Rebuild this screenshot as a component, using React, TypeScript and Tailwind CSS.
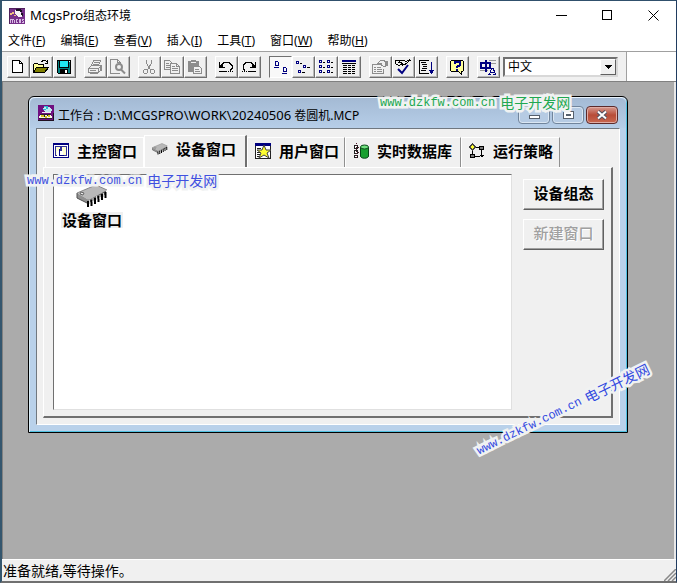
import { useState } from "react";
import type { ReactNode } from "react";
import clsx from "clsx";

const MENUS = [
  { label: "文件", hotkey: "F" },
  { label: "编辑", hotkey: "E" },
  { label: "查看", hotkey: "V" },
  { label: "插入", hotkey: "I" },
  { label: "工具", hotkey: "T" },
  { label: "窗口", hotkey: "W" },
  { label: "帮助", hotkey: "H" },
];

function Icon({ children, className = "w-4 h-4" }: { children: ReactNode; className?: string }) {
  return (
    <svg className={clsx("block shrink-0", className)} viewBox="0 0 16 16" fill="none" shapeRendering="crispEdges" aria-hidden="true">
      {children}
    </svg>
  );
}

/* ---------- Toolbar icons ---------- */

const NewIcon = () => (
  <Icon>
    <path d="M2.5 1.5h7l3 3v9h-10z" fill="#fff" stroke="#000" />
    <path d="M9.5 1.5v3h3" stroke="#000" />
  </Icon>
);

const OpenIcon = () => (
  <Icon>
    <path d="M.5 13.5v-8l1-1h3l1 1h5v3" fill="#ffff99" stroke="#000" />
    <path d="M.5 13.5l3-5h12l-4 5z" fill="#808000" stroke="#000" />
    <path d="M8.5 3.5l1-2h3l2 2M14.5 1v3M12 4.5h3" stroke="#000" />
  </Icon>
);

const SaveIcon = () => (
  <Icon>
    <path d="M1.5 1.5h13v13h-12l-1-1z" fill="#008080" stroke="#000" />
    <path d="M4 2h8v6H4z" fill="#20e8f0" />
    <path d="M4 10h8v4H4z" fill="#000" />
    <path d="M9 11h2v3H9zM13 2h1v1h-1z" fill="#fff" />
    <path d="M3.5 2v6M12.5 2v6M3 8.5h10" stroke="#000" />
  </Icon>
);

const PrintIcon = () => (
  <Icon className="w-4 h-4 text-[#8c8c8c]">
    <path d="M4.5 6.5l2-5h7l-2 5M7 3.5h5M6 5.500h5" stroke="currentColor" />
    <path d="M1.5 9.5l3-3h10v4l-3 3h-10zM1.5 9.5h10l3-3M11.5 9.5v4M3 11.5h6" stroke="currentColor" />
    <path d="M3 13h8v2H3zM13 8h2v4h-2z" fill="currentColor" />
  </Icon>
);

const PreviewIcon = () => (
  <Icon className="w-4 h-4 text-[#8c8c8c]">
    <path d="M9.5 14.5h-9v-14h7l3 3v2M7.5 .5v3h3" stroke="currentColor" />
    <circle cx="9" cy="8" r="3" stroke="currentColor" strokeWidth="2" shapeRendering="auto" />
    <path d="M11 10.5l4 4" stroke="currentColor" strokeWidth="2" shapeRendering="auto" />
  </Icon>
);

const CutIcon = () => (
  <Icon className="w-4 h-4 text-[#8c8c8c]">
    <path d="M5.5 1v3l4 7M10.5 1v3l-4 7" stroke="currentColor" />
    <path d="M3.5 10.5h2l1 1v2l-1 1h-2l-1-1v-2zM10.5 10.5h2l1 1v2l-1 1h-2l-1-1v-2z" stroke="currentColor" />
  </Icon>
);

const CopyIcon = () => (
  <Icon className="w-4 h-4 text-[#8c8c8c]">
    <path d="M.5 1.5h5l2 2v7h-7zM2 4.5h3M2 6.5h4M2 8.5h4" stroke="currentColor" />
    <path d="M6.5 4.5h6l3 3v7h-9z" fill="#f0f0f0" stroke="currentColor" />
    <path d="M12.5 4.5v3h3M8 7.5h3M8 9.5h6M8 11.5h6" stroke="currentColor" />
  </Icon>
);

const PasteIcon = () => (
  <Icon className="w-4 h-4 text-[#8c8c8c]">
    <path d="M1 2h3V1h5v1h3v11H1z" fill="currentColor" />
    <path d="M4 3h5v1H4z" fill="#f0f0f0" />
    <path d="M6.5 7.5h6l2 2v5h-8z" fill="#f0f0f0" stroke="currentColor" />
    <path d="M8 10.5h4M8 12.5h5" stroke="currentColor" />
  </Icon>
);

const UndoIcon = () => (
  <Icon>
    <path d="M3 6.5l3-3h5l3 3v3l-2 2" stroke="#000" />
    <path d="M1 3h1v5h5v1H1zM2 6h3v2H2z" fill="#000" />
    <path d="M1 12.5h8" stroke="#000" />
    <path d="M10 12.5h5" stroke="#000" strokeDasharray="1 1" />
  </Icon>
);

const RedoIcon = () => (
  <Icon>
    <path d="M13 6.5l-3-3H5l-3 3v3l2 2" stroke="#000" />
    <path d="M14 3h1v6H9V8h5zM11 6h3v2h-3z" fill="#000" />
    <path d="M7 12.5h8" stroke="#000" />
    <path d="M1 12.5h5" stroke="#000" strokeDasharray="1 1" />
  </Icon>
);

const LargeIconsIcon = () => (
  <Icon className="w-4 h-4 text-[#000080]">
    <path d="M3.5 2.5h2l1 1v3h-3zM2 8.5h5M11.5 8.5h2l1 1v3h-3zM10 14.5h5" stroke="currentColor" />
  </Icon>
);

const SmallIconsIcon = () => (
  <Icon className="w-4 h-4 text-[#000080]">
    <path d="M1 2h3v3H1zM8 6h3v3H8zM3 11h3v3H3z" fill="currentColor" />
    <path d="M2 3h1v1H2zM9 7h1v1H9zM4 12h1v1H4z" fill="#fff" />
    <path d="M5 4.5h2M12 8.5h3M7 13.5h3" stroke="#000" />
  </Icon>
);

const ListIcon = () => (
  <Icon className="w-4 h-4 text-[#000080]">
    {[1, 6, 11].map((y) => (
      <g key={y}>
        <path d={`M1 ${y}h3v3h-3zM9 ${y}h3v3h-3z`} fill="currentColor" />
        <path d={`M2 ${y + 1}h1v1h-1zM10 ${y + 1}h1v1h-1z`} fill="#fff" />
        <path d={`M5 ${y + 2}h2v1h-2zM13 ${y + 2}h2v1h-2z`} fill="#000" />
      </g>
    ))}
  </Icon>
);

const DetailIcon = () => (
  <Icon>
    <path d="M1 1h14v2H1z" fill="#000080" />
    <path d="M1 4.5h14" stroke="#000" />
    <path d="M2 6.5h12M2 8.5h12M2 10.5h12M2 12.5h12M2 14.5h12" stroke="#000" strokeDasharray="4 1 3 1 3 1" />
  </Icon>
);

const PropertiesIcon = () => (
  <Icon className="w-4 h-4 text-[#8c8c8c]">
    <path d="M9.5 5.5h-9v9h11v-5M2 8.5h2M2 10.5h2M2 12.5h2M5 8.5h4M5 10.5h5M5 12.5h5" stroke="currentColor" />
    <path d="M5.5 4.5l3-3h3l4 2v3l-3 1-3-1v-2z" fill="#f0f0f0" stroke="currentColor" />
    <path d="M13 2h3v5h-3z" fill="currentColor" />
  </Icon>
);

const CheckIcon = () => (
  <Icon>
    <path d="M.5 1.5h5l-2 2h3v2l-3 1-3-2zM6 1.5h3l2 1 4-2M7.5 4v2l3-1 5-4" stroke="#000" />
    <path d="M3 10l4 4 6-8" stroke="#000080" strokeWidth="2" shapeRendering="auto" />
  </Icon>
);

const SortIcon = () => (
  <Icon>
    <path d="M10.5 14.5h-9v-13h9M3 3.5h5M4 5.5h5M5 7.5h4M4 9.5h5M3 11.5h5" stroke="#000" />
    <path d="M13 3h1v12h-1zM11 11h5v1h-5zM12 12h3v2h-3z" fill="#000080" />
  </Icon>
);

const HelpIcon = () => (
  <Icon>
    <path d="M2.5 1.5h11l1 1v9l-1 1h-1v3l-3-3h-7l-1-1v-9z" fill="#ffff99" stroke="#000" />
    <path d="M6 5V3h5v3L8 8v1" stroke="#000080" strokeWidth="2" />
    <path d="M7 10h2v2H7z" fill="#000080" />
  </Icon>
);

const LanguageIcon = () => (
  <Icon>
    <path d="M0 4.5h16M0 11.5h8M9 1.5h7" stroke="#999" />
    <path d="M1 4h9v5H1zM5.5 1v12" stroke="#000080" strokeWidth="2" />
    <path d="M9.5 15l2.500-6h1l2.500 6M10 13h5M8 15.5h3M13 15.5h3" stroke="#000080" />
  </Icon>
);

/* ---------- Application icons ---------- */

function AppIcon() {
  return (
    <Icon>
      <path d="M0 0h16v16H0z" fill="#76308a" />
      <path d="M0 0h16v1H0zM0 0h1v16H0z" fill="#50205c" />
      <path d="M6 2h4l2 2 2 3-2 2H9L6 6z" fill="#f8f4f8" />
      <path d="M7 1h5v1h1v2h-2V3H7zM12 5h2v3h-1V7h-1z" fill="#181020" />
      <path d="M1 5h2V4h2v2H3v1H1zM5 7h2v1H5z" fill="#f0c080" />
      <path d="M1 11h4v1H1zM1 12h1v3H1zM3 12h1v3H3zM5 12h1v3H5zM7 11h2v1H8v2h1v1H7zM10 11h2v4h-2zM13 11h2v1h-1v1h1v2h-2v-1h1v-1h-1z" fill="#d8b8e4" />
    </Icon>
  );
}

function WorkbenchIcon() {
  return (
    <Icon>
      <path d="M0 0h16v16H0z" fill="#701080" />
      <path d="M4 4l3-2h4l4 3-3 2H7z" fill="#c0e8f0" />
      <path d="M6 1h4v1H6zM5 4h3v1H5zM8 2h2v2H8z" fill="#28b8d0" />
      <path d="M4 7h9v1H4z" fill="#f0e8f4" />
      <path d="M2 9h11l1 4H1z" fill="#f8f8e8" />
      <path d="M3 10h3v2H3zM7 11h2v2H7zM10 10h2v2h-2z" fill="#d8c820" />
      <path d="M2 9h11v1H2zM6 10h1v2H6zM9 10h1v1H9zM1 13h13v1H1z" fill="#302030" />
      <path d="M0 15h16v1H0zM15 8h1v8h-1z" fill="#201020" />
    </Icon>
  );
}

function ChipIcon({ className }: { className: string }) {
  return (
    <svg className={clsx("block shrink-0", className)} viewBox="0 0 32 24" fill="none" aria-hidden="true">
      <path d="M12 15L30 6v4L13 19z" fill="#606060" />
      <path d="M1 9L20 1l11 5-18 10z" fill="#b8b8b8" />
      <path d="M1 9L20 1l11 5" stroke="#888" />
      <path d="M1 9l12 7v4L1 14z" fill="#909090" />
      <path d="M1 9v5l12 6" stroke="#505050" />
      <path d="M5 8l3 1-1 2-3-1z" fill="#e8e8e8" stroke="#666" />
      <path d="M12 17v6M15.500 16v6M19 14v6M22.500 12v6M26 10v6M29.500 8v6" stroke="#000" strokeWidth="2" />
      <path d="M13.500 16v4M17 14v4M20.500 12v4M24 11v4M27.500 9v4" stroke="#d8d8d8" />
    </svg>
  );
}

const MainWindowIcon = () => (
  <Icon>
    <path d="M.5 .5h15v14H.5z" fill="#fff" stroke="#000080" />
    <path d="M0 0h16v2H0z" fill="#000080" />
    <path d="M2.5 3.500h5v9h-5z" fill="#ffffd0" stroke="#303098" />
    <path d="M8.5 3.500h5v9h-5z" fill="#ffffd0" stroke="#303098" />
    <path d="M4 8h6v4H7v1H4z" fill="#fff" />
    <path d="M6.5 6v6h4" stroke="#000080" />
  </Icon>
);

const UserWindowIcon = () => (
  <Icon>
    <path d="M.5 .5h15v15H.5z" fill="#fff" stroke="#222" />
    <path d="M0 0h16v3H0z" fill="#000080" />
    <path d="M2 5.5h4M2 7.5h3M2 9.5h3M2 11.5h3M2 13.5h4" stroke="#222" />
    <path d="M9 2l2 5h5l-4 3 2 5-5-3-5 3 2-5-4-3h5z" fill="#ffff30" stroke="#444" shapeRendering="auto" />
  </Icon>
);

const DatabaseIcon = () => (
  <Icon>
    <path d="M1.5 2.5h3v3h-3zM1.5 7.5h3v3h-3zM1.5 12.5h3v2h-3z" fill="#fff" stroke="#222" />
    <path d="M3.5 0v16M5 4.5h3M5 9.5h3" stroke="#501828" strokeDasharray="1 1" />
    <path d="M7.5 4v9c0 3 8 3 8 0V4" fill="#18a030" stroke="#084818" shapeRendering="auto" />
    <ellipse cx="11.5" cy="4" rx="4" ry="2" fill="#70e080" stroke="#084818" shapeRendering="auto" />
  </Icon>
);

const StrategyIcon = () => (
  <Icon>
    <path d="M5 4.5h8M12.5 5v8M10.500 13.500H6M3.5 5v7" stroke="#000" />
    <path d="M3.5 1l3 3-3 3-3-3z" fill="#ffff30" stroke="#444" />
    <path d="M1.5 11.5h4v3h-4zM10.5 3.5h4v3h-4z" fill="#777" stroke="#000" />
    <path d="M11 12h4l-2 3z" fill="#000" />
  </Icon>
);

const TOOL_GROUPS = [
  [
    { label: "新建", icon: <NewIcon /> },
    { label: "打开", icon: <OpenIcon /> },
    { label: "保存", icon: <SaveIcon /> },
  ],
  [
    { label: "打印", icon: <PrintIcon />, disabled: true },
    { label: "打印预览", icon: <PreviewIcon />, disabled: true },
  ],
  [
    { label: "剪切", icon: <CutIcon />, disabled: true },
    { label: "复制", icon: <CopyIcon />, disabled: true },
    { label: "粘贴", icon: <PasteIcon />, disabled: true },
  ],
  [
    { label: "撤消", icon: <UndoIcon /> },
    { label: "重做", icon: <RedoIcon /> },
  ],
  [
    { label: "大图标", icon: <LargeIconsIcon />, pressed: true },
    { label: "小图标", icon: <SmallIconsIcon /> },
    { label: "列表", icon: <ListIcon /> },
    { label: "详细资料", icon: <DetailIcon /> },
  ],
  [
    { label: "属性", icon: <PropertiesIcon />, disabled: true },
    { label: "组态检查", icon: <CheckIcon /> },
    { label: "排序", icon: <SortIcon /> },
  ],
  [{ label: "帮助", icon: <HelpIcon /> }],
  [{ label: "语言", icon: <LanguageIcon /> }],
];

const TABS = [
  { label: "主控窗口", icon: <MainWindowIcon />, width: "w-[99px]" },
  { label: "设备窗口", icon: <ChipIcon className="w-4 h-3" />, width: "w-[103px]" },
  { label: "用户窗口", icon: <UserWindowIcon />, width: "w-[98px]" },
  { label: "实时数据库", icon: <DatabaseIcon />, width: "w-[116px]" },
  { label: "运行策略", icon: <StrategyIcon />, width: "w-[99px]" },
];

function ToolButton({ label, icon, pressed, disabled }: { label: string; icon: ReactNode; pressed?: boolean; disabled?: boolean }) {
  return (
    <button
      type="button"
      aria-label={label}
      aria-pressed={pressed}
      disabled={disabled}
      className={clsx(
        "flex h-[22px] w-[23px] items-center justify-center border pr-px",
        pressed
          ? "border-t-[#707070] border-l-[#707070] border-r-white border-b-white bg-[#f8f8f8]"
          : "border-t-white border-l-white border-r-[#707070] border-b-[#707070] bg-[#f0f0f0] shadow-[inset_-1px_-1px_0_#b8b8b8]"
      )}
    >
      {icon}
    </button>
  );
}

function SideButton({ children, disabled }: { children: ReactNode; disabled?: boolean }) {
  return (
    <button
      type="button"
      disabled={disabled}
      className="h-[31px] w-full border border-t-white border-l-white border-r-[#606060] border-b-[#606060] bg-[#f0f0f0] pb-1 text-[15px] leading-5 font-bold shadow-[inset_-1px_-1px_0_#a0a0a0] disabled:font-medium disabled:text-[#a0a0a0] disabled:[text-shadow:1px_1px_0_#fff]"
    >
      {children}
    </button>
  );
}

function Watermark({ className }: { className: string }) {
  return (
    <div
      className={clsx(
        "pointer-events-none absolute z-10 flex items-center gap-[5px] leading-5 whitespace-nowrap [paint-order:stroke_fill] [-webkit-text-stroke:5px_#f0f2f2]",
        className
      )}
    >
      <span className="font-['Liberation_Mono',monospace] text-[12px]">www.dzkfw.com.cn</span>
      <span className="text-[14px]">电子开发网</span>
    </div>
  );
}

export default function App() {
  const [activeTab, setActiveTab] = useState("设备窗口");
  const [language, setLanguage] = useState("中文");

  return (
    <div className="relative flex min-h-screen flex-col overflow-hidden border-t border-r border-b-2 border-l-2 border-t-[#30506c] border-r-[#203c60] border-b-[#707070] border-l-[#34566e] bg-white font-['Noto_Sans','Noto_Sans_CJK_SC',sans-serif] text-[12px] leading-4 text-black">
      {/* Title bar */}
      <header className="flex h-[29px] items-center pl-[7px]">
        <AppIcon />
        <h1 className="ml-[5px] flex-1">
          <span className="text-[13px]">McgsPro</span>组态环境
        </h1>
        <div className="flex">
          <button type="button" aria-label="最小化" className="flex h-7 w-[46px] items-center justify-center">
            <svg className="h-[11px] w-[11px]" viewBox="0 0 11 11" shapeRendering="crispEdges"><path d="M0 5.5h11" stroke="#000" /></svg>
          </button>
          <button type="button" aria-label="最大化" className="flex h-7 w-[46px] items-center justify-center">
            <svg className="h-[11px] w-[11px]" viewBox="0 0 11 11" shapeRendering="crispEdges"><path d="M.5 .5h9v9H.5z" fill="none" stroke="#000" /></svg>
          </button>
          <button type="button" aria-label="关闭" className="flex h-7 w-[46px] items-center justify-center">
            <svg className="h-[11px] w-[11px]" viewBox="0 0 11 11"><path d="M.5 .5l10 10M10.5 .5l-10 10" stroke="#000" /></svg>
          </button>
        </div>
      </header>

      {/* Menu bar */}
      <nav className="flex h-[21px] items-center gap-[15px] pl-[6px]">
        {MENUS.map((menu) => (
          <button key={menu.hotkey} type="button">
            {menu.label}(<span className="underline">{menu.hotkey}</span>)
          </button>
        ))}
      </nav>

      {/* Toolbar */}
      <div className="flex h-[31px] border-t border-b border-t-[#a0a0a0] border-b-[#808080] bg-white">
        <div role="toolbar" className="flex items-center gap-2 border-r border-r-[#a0a0a0] bg-[#f0f0f0] pr-2 pl-[5px]">
          {TOOL_GROUPS.map((group, i) => (
            <div key={i} className="flex">
              {group.map((tool) => (
                <ToolButton key={tool.label} {...tool} />
              ))}
            </div>
          ))}
          <div className="relative -ml-[5px]">
            <select
              aria-label="语言选择"
              value={language}
              onChange={(e) => setLanguage(e.target.value)}
              className="block h-5 w-[115px] appearance-none rounded-none border-2 border-t-[#707070] border-r-[#d8d8d8] border-b-[#d8d8d8] border-l-[#707070] bg-white pl-[3px] text-[12px] leading-4"
            >
              <option>中文</option>
              <option>English</option>
            </select>
            <span className="pointer-events-none absolute top-[2px] right-[2px] flex h-4 w-4 items-center justify-center border border-t-white border-r-[#606060] border-b-[#606060] border-l-white bg-[#f0f0f0]">
              <svg className="h-1 w-[7px]" viewBox="0 0 7 4" shapeRendering="crispEdges"><path d="M0 0h7v1H6v1H5v1H4v1H3V3H2V2H1V1H0z" /></svg>
            </span>
          </div>
        </div>
      </div>

      {/* MDI area */}
      <main className="flex-1 border-r-2 border-l border-r-[#e8e8e8] border-l-[#808080] bg-[#ababab] pt-[14px] pr-[46px] pb-6 pl-[25px]">
        <section className="rounded-t-md border border-black bg-[#b9d1ea] px-[7px] pb-[7px] shadow-[inset_0_1px_0_#e8f2fc,inset_1px_0_0_#d8ecf8,inset_-1px_-1px_0_#50c0e0]">
          <div className="-mx-[6px] mt-px flex h-[30px] items-center rounded-t-md bg-linear-to-b from-[#a4bad4] to-[#b6cee8] px-2">
            <WorkbenchIcon />
            <h2 className="ml-1 flex-1 pt-1 whitespace-nowrap">
              工作台 : <span className="text-[13px]">D:\MCGSPRO\WORK\20240506</span> 卷圆机.MCP
            </h2>
            <div className="flex gap-[2px] pt-1">
              <button type="button" aria-label="最小化工作台" className="flex h-[18px] w-8 items-center justify-center rounded-sm border border-[#71859c] bg-[#b6cbe3] shadow-[inset_0_0_0_1px_#dbe7f3]">
                <svg className="h-2 w-[11px]" viewBox="0 0 11 8" shapeRendering="crispEdges"><path d="M.5 4.500h10v3H.5z" fill="#fff" stroke="#56606c" /></svg>
              </button>
              <button type="button" aria-label="最大化工作台" className="flex h-[18px] w-8 items-center justify-center rounded-sm border border-[#71859c] bg-[#b6cbe3] shadow-[inset_0_0_0_1px_#dbe7f3]">
                <svg className="h-2 w-[11px]" viewBox="0 0 11 8" shapeRendering="crispEdges"><path d="M.5 .5h10v7H.5z" fill="#fff" stroke="#56606c" /><path d="M3.5 3.5h4v1h-4z" stroke="#56606c" /></svg>
              </button>
              <button type="button" aria-label="关闭工作台" className="flex h-[18px] w-8 items-center justify-center rounded-sm border border-[#5c2a2a] bg-linear-to-b from-[#d59a90] via-[#b84c38] via-50% to-[#c86850] shadow-[inset_0_0_0_1px_#e0aca4]">
                <svg className="h-[10px] w-3" viewBox="0 0 12 10"><path d="M2 1.5l8 7M10 1.5l-8 7" stroke="#505060" strokeWidth="4" /><path d="M2 1.5l8 7M10 1.5l-8 7" stroke="#fff" strokeWidth="2" /></svg>
              </button>
            </div>
          </div>

          <div className="border border-t-[#707880] border-r-white border-b-white border-l-[#707880] bg-[#f0f0f0] p-[6px]">
            {/* Tabs */}
            <div role="tablist" className="flex h-8 items-end pl-[2px]">
              {TABS.map((tab) => {
                const active = tab.label === activeTab;
                return (
                  <button
                    key={tab.label}
                    type="button"
                    role="tab"
                    aria-selected={active}
                    onClick={() => setActiveTab(tab.label)}
                    className={clsx(
                      "flex items-center gap-2 border-t border-l border-t-white border-l-white pl-[7px] text-[15px] leading-5 font-bold whitespace-nowrap",
                      tab.width,
                      active ? "h-8 border-r-2 border-r-[#707070] pb-[5px]" : "h-[30px] border-r border-r-[#909090] pb-1 first:border-r-white"
                    )}
                  >
                    {tab.icon}
                    {tab.label}
                  </button>
                );
              })}
            </div>

            <div className="flex gap-[11px] border border-t-white border-r-2 border-r-[#707070] border-b-2 border-b-[#707070] border-l-white pt-[6px] pr-[7px] pb-[6px] pl-[9px]">
              <div role="tabpanel" className="h-[236px] flex-1 border border-t-[#707070] border-r-[#e0e0e0] border-b-[#e0e0e0] border-l-[#707070] bg-white pt-[9px] pl-[7px]">
                <button type="button" className="flex flex-col items-center gap-1">
                  <ChipIcon className="h-6 w-8" />
                  <span className="bg-[#f0f0f0] px-px text-[15px] leading-4 font-bold">设备窗口</span>
                </button>
              </div>
              <div className="flex w-[81px] flex-col gap-[9px] pt-[5px]">
                <SideButton>设备组态</SideButton>
                <SideButton disabled>新建窗口</SideButton>
              </div>
            </div>
          </div>
        </section>
      </main>

      {/* Status bar */}
      <footer className="flex h-[22px] items-center justify-between border-t border-t-white bg-[#f0f0f0] pl-px text-[14px] leading-5">
        <p>准备就绪,等待操作。</p>
        <svg className="h-3 w-3 self-end" viewBox="0 0 12 12"><path d="M0 12L12 0M4 12l8-8M8 12l4-4" stroke="#888" strokeWidth="1.5" /></svg>
      </footer>

      {/* Overlaid site marks */}
      <Watermark className="top-[92px] left-[378px] text-[#20a850]" />
      <Watermark className="top-[170px] left-[25px] text-[#4050e0]" />
      <Watermark className="top-[399px] left-[466px] -rotate-[26deg] text-[#3048e0]" />
    </div>
  );
}
